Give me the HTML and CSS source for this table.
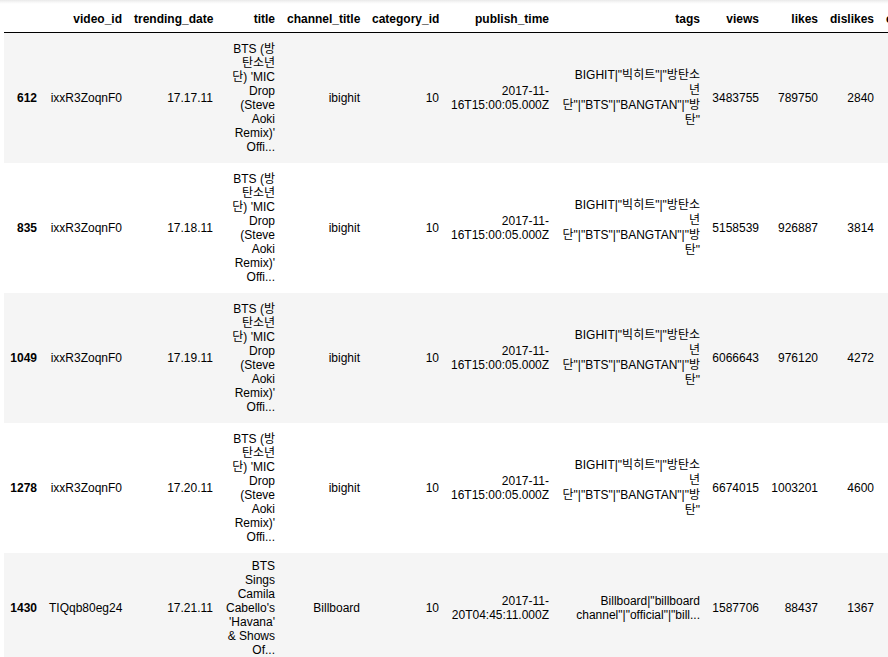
FILE: index.html
```html
<!DOCTYPE html>
<html lang="en">
<head>
<meta charset="utf-8">
<title>DataFrame</title>
<link rel="stylesheet" href="styles.css">
</head>
<body>
<div class="output">
  <table class="dataframe">
    <thead>
      <tr>
        <th class="c-idx"></th>
        <th class="c-vid">video_id</th>
        <th class="c-date">trending_date</th>
        <th class="c-title">title</th>
        <th class="c-chan">channel_title</th>
        <th class="c-cat">category_id</th>
        <th class="c-pub">publish_time</th>
        <th class="c-tags">tags</th>
        <th class="c-views">views</th>
        <th class="c-likes">likes</th>
        <th class="c-dis">dislikes</th>
        <th class="c-com">comment_count</th>
      </tr>
    </thead>
    <tbody>
      <tr class="tall">
        <th>612</th>
        <td>ixxR3ZoqnF0</td>
        <td>17.17.11</td>
        <td class="title"><span class="ko">BTS (방</span><br><span class="ko">탄소년</span><br><span class="ko">단) 'MIC</span><br>Drop<br>(Steve<br>Aoki<br>Remix)'<br>Offi...</td>
        <td>ibighit</td>
        <td>10</td>
        <td class="nw">2017-11-<br>16T15:00:05.000Z</td>
        <td class="nw"><span class="ko">BIGHIT|"빅히트"|"방탄소</span><br><span class="ko">년</span><br><span class="ko">단"|"BTS"|"BANGTAN"|"방</span><br><span class="ko">탄"</span></td>
        <td>3483755</td>
        <td>789750</td>
        <td>2840</td>
        <td></td>
      </tr>
      <tr class="tall">
        <th>835</th>
        <td>ixxR3ZoqnF0</td>
        <td>17.18.11</td>
        <td class="title"><span class="ko">BTS (방</span><br><span class="ko">탄소년</span><br><span class="ko">단) 'MIC</span><br>Drop<br>(Steve<br>Aoki<br>Remix)'<br>Offi...</td>
        <td>ibighit</td>
        <td>10</td>
        <td class="nw">2017-11-<br>16T15:00:05.000Z</td>
        <td class="nw"><span class="ko">BIGHIT|"빅히트"|"방탄소</span><br><span class="ko">년</span><br><span class="ko">단"|"BTS"|"BANGTAN"|"방</span><br><span class="ko">탄"</span></td>
        <td>5158539</td>
        <td>926887</td>
        <td>3814</td>
        <td></td>
      </tr>
      <tr class="tall">
        <th>1049</th>
        <td>ixxR3ZoqnF0</td>
        <td>17.19.11</td>
        <td class="title"><span class="ko">BTS (방</span><br><span class="ko">탄소년</span><br><span class="ko">단) 'MIC</span><br>Drop<br>(Steve<br>Aoki<br>Remix)'<br>Offi...</td>
        <td>ibighit</td>
        <td>10</td>
        <td class="nw">2017-11-<br>16T15:00:05.000Z</td>
        <td class="nw"><span class="ko">BIGHIT|"빅히트"|"방탄소</span><br><span class="ko">년</span><br><span class="ko">단"|"BTS"|"BANGTAN"|"방</span><br><span class="ko">탄"</span></td>
        <td>6066643</td>
        <td>976120</td>
        <td>4272</td>
        <td></td>
      </tr>
      <tr class="tall">
        <th>1278</th>
        <td>ixxR3ZoqnF0</td>
        <td>17.20.11</td>
        <td class="title"><span class="ko">BTS (방</span><br><span class="ko">탄소년</span><br><span class="ko">단) 'MIC</span><br>Drop<br>(Steve<br>Aoki<br>Remix)'<br>Offi...</td>
        <td>ibighit</td>
        <td>10</td>
        <td class="nw">2017-11-<br>16T15:00:05.000Z</td>
        <td class="nw"><span class="ko">BIGHIT|"빅히트"|"방탄소</span><br><span class="ko">년</span><br><span class="ko">단"|"BTS"|"BANGTAN"|"방</span><br><span class="ko">탄"</span></td>
        <td>6674015</td>
        <td>1003201</td>
        <td>4600</td>
        <td></td>
      </tr>
      <tr>
        <th>1430</th>
        <td>TIQqb80eg24</td>
        <td>17.21.11</td>
        <td class="title">BTS<br>Sings<br>Camila<br>Cabello's<br>'Havana'<br>&amp; Shows<br>Of...</td>
        <td>Billboard</td>
        <td>10</td>
        <td class="nw">2017-11-<br>20T04:45:11.000Z</td>
        <td class="nw">Billboard|"billboard<br>channel"|"official"|"bill...</td>
        <td>1587706</td>
        <td>88437</td>
        <td>1367</td>
        <td></td>
      </tr>
    </tbody>
  </table>
</div>
</body>
</html>
```

FILE: styles.css
```css
html, body {
  margin: 0;
  padding: 0;
  background: #fff;
}

body {
  font-family: "Liberation Sans", Arial, "Noto Sans CJK KR", sans-serif;
  font-size: 12px;
  color: #000;
  overflow: hidden;
}

.output {
  padding: 6px 0 0 4px;
  background: linear-gradient(to bottom, #e9e9e9 0, #f6f6f6 2px, #fff 4px);
}

.dataframe {
  border-collapse: collapse;
  border: none;
  table-layout: fixed;
  width: 978px;
}

.dataframe th,
.dataframe td {
  box-sizing: border-box;
  text-align: right;
  vertical-align: middle;
  padding: 6px;
  line-height: normal;
  border: none;
  font-weight: normal;
}

.dataframe thead th {
  font-weight: bold;
  vertical-align: bottom;
  border-bottom: 1px solid #000;
  white-space: nowrap;
}

.dataframe tbody th {
  font-weight: bold;
}

.dataframe tbody tr:nth-child(odd) {
  background: #f5f5f5;
}

.dataframe tr.tall {
  height: 130px;
}

.c-idx { width: 39px; }
.c-vid { width: 85px; }
.c-date { width: 91px; }
.c-title { width: 62px; }
.c-chan { width: 85px; }
.c-cat { width: 79px; }
.c-pub { width: 110px; }
.c-tags { width: 151px; }
.c-views { width: 59px; }
.c-likes { width: 59px; }
.c-dis { width: 56px; }
.c-com { width: 102px; }

.title,
.nw {
  white-space: nowrap;
}

.ko {
  line-height: 15px;
}

.title .ko {
  line-height: 14px;
}
```
